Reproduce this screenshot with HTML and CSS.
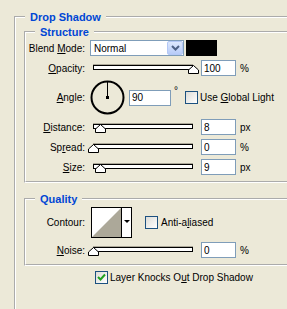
FILE: index.html
```html
<!DOCTYPE html>
<html lang="en">
<head>
    <meta charset="UTF-8">
    <title>Layer Style - Drop Shadow</title>
    <link rel="stylesheet" href="styles.css">
</head>
<body>
    <div class="dialog">
        <fieldset class="group outer">
            <legend>Drop Shadow</legend>

            <!-- structure -->
            <fieldset class="group sub">
                <legend>Structure</legend>
                <div class="rows">
                    <div class="row">
                        <label class="lbl">Blend <u>M</u>ode:</label>
                        <div class="select">
                            <span>Normal</span>
                            <span class="select-btn">
                                <svg width="9" height="6" viewBox="0 0 9 6"><path d="M1 1 L4.5 4.5 L8 1" fill="none" stroke="#4d6185" stroke-width="2"/></svg>
                            </span>
                        </div>
                        <div class="swatch"></div>
                    </div>
                    <div class="row">
                        <label class="lbl"><u>O</u>pacity:</label>
                        <div class="slider">
                            <div class="track"></div>
                            <svg class="thumb" style="left: calc(100% - 5px)" width="11" height="9" viewBox="0 0 11 9"><path d="M0.5 8.5 L0.5 5 L5.5 0.5 L10.5 5 L10.5 8.5 Z" fill="#fff" stroke="#000"/></svg>
                        </div>
                        <input class="num" type="text" value="100">
                        <span class="unit">%</span>
                    </div>
                    <div class="row angle-row">
                        <label class="lbl"><u>A</u>ngle:</label>
                        <svg class="dial" width="35" height="35" viewBox="0 0 35 35">
                            <circle cx="17.5" cy="17.5" r="16" fill="none" stroke="#000" stroke-width="2"/>
                            <line x1="17.5" y1="17.5" x2="17.5" y2="2" stroke="#000" stroke-width="1"/>
                            <rect x="16" y="16" width="3" height="3" fill="#000"/>
                        </svg>
                        <input class="num num-angle" type="text" value="90">
                        <span class="deg">°</span>
                        <label class="check global"><span class="box"></span><span>Use <u>G</u>lobal Light</span></label>
                    </div>
                    <div class="row">
                        <label class="lbl"><u>D</u>istance:</label>
                        <div class="slider">
                            <div class="track"></div>
                            <svg class="thumb" style="left: calc(7% - 5px)" width="11" height="9" viewBox="0 0 11 9"><path d="M0.5 8.5 L0.5 5 L5.5 0.5 L10.5 5 L10.5 8.5 Z" fill="#fff" stroke="#000"/></svg>
                        </div>
                        <input class="num" type="text" value="8">
                        <span class="unit">px</span>
                    </div>
                    <div class="row">
                        <label class="lbl">Sp<u>r</u>ead:</label>
                        <div class="slider">
                            <div class="track"></div>
                            <svg class="thumb" style="left: -5px" width="11" height="9" viewBox="0 0 11 9"><path d="M0.5 8.5 L0.5 5 L5.5 0.5 L10.5 5 L10.5 8.5 Z" fill="#fff" stroke="#000"/></svg>
                        </div>
                        <input class="num" type="text" value="0">
                        <span class="unit">%</span>
                    </div>
                    <div class="row">
                        <label class="lbl"><u>S</u>ize:</label>
                        <div class="slider">
                            <div class="track"></div>
                            <svg class="thumb" style="left: calc(7% - 5px)" width="11" height="9" viewBox="0 0 11 9"><path d="M0.5 8.5 L0.5 5 L5.5 0.5 L10.5 5 L10.5 8.5 Z" fill="#fff" stroke="#000"/></svg>
                        </div>
                        <input class="num" type="text" value="9">
                        <span class="unit">px</span>
                    </div>
                </div>
            </fieldset>

            <!-- quality -->
            <fieldset class="group sub quality">
                <legend>Quality</legend>
                <div class="rows">
                    <div class="row contour-row">
                        <label class="lbl">Contour:</label>
                        <div class="contour">
                            <svg class="contour-preview" width="29" height="29" viewBox="0 0 29 29">
                                <rect width="29" height="29" fill="#fff"/>
                                <path d="M29 0 L29 29 L0 29 Z" fill="#aca899"/>
                            </svg>
                            <span class="contour-btn"></span>
                        </div>
                        <label class="check anti"><span class="box"></span><span>Anti-a<u>l</u>iased</span></label>
                    </div>
                    <div class="row">
                        <label class="lbl"><u>N</u>oise:</label>
                        <div class="slider">
                            <div class="track"></div>
                            <svg class="thumb" style="left: -5px" width="11" height="9" viewBox="0 0 11 9"><path d="M0.5 8.5 L0.5 5 L5.5 0.5 L10.5 5 L10.5 8.5 Z" fill="#fff" stroke="#000"/></svg>
                        </div>
                        <input class="num" type="text" value="0">
                        <span class="unit">%</span>
                    </div>
                </div>
            </fieldset>

            <label class="check knock">
                <span class="box">
                    <svg width="11" height="11" viewBox="0 0 11 11"><path d="M2 5 L4.5 7.5 L9 2.5" fill="none" stroke="#21a121" stroke-width="2"/></svg>
                </span>
                <span>Layer Knocks O<u>u</u>t Drop Shadow</span>
            </label>
        </fieldset>
    </div>
</body>
</html>
```

FILE: styles.css
```css
html, body { margin: 0; width: 287px; height: 309px; overflow: hidden; }
body {
    background: #ece9d8; color: #000;
    font: 10px "Liberation Sans", Arial, sans-serif;
}
.dialog { padding: 10px 0 0 14px; height: 309px; box-sizing: border-box; }

/* etched group boxes, open to the right like the clipped dialog */
.group {
    margin: 0; padding: 0; min-width: 0;
    border: 2px groove #fff; border-right: 0;
}
.group legend {
    padding: 0 5px;
    font: bold 11px/14px "Liberation Sans", Arial, sans-serif;
    color: #0046d5;
}
.outer { height: 299px; box-sizing: border-box; padding: 0 0 0 8px; border-bottom: 0; }
.outer > legend { margin-left: 1px; }
.sub { margin-top: 1px; padding: 1px 0 6px 0; }
.sub > legend { margin-left: 9px; }
.quality { margin-top: 9px; }

.rows { display: flex; flex-direction: column; gap: 4px; }
.row { display: flex; align-items: center; height: 16px; }
.angle-row { height: 35px; }
.contour-row { height: 31px; }
.lbl { width: 59px; flex: none; text-align: right; }

/* blend mode */
.select {
    display: flex; align-items: center;
    width: 94px; height: 16px; margin-left: 5px; padding-left: 3px;
    box-sizing: border-box; border: 1px solid #7f9db9; background: #fff;
}
.select-btn {
    display: flex; align-items: center; justify-content: center;
    width: 16px; height: 14px; margin-left: auto; box-sizing: border-box;
    border: 1px solid #b4c8f6; border-radius: 2px;
    background: linear-gradient(#dde8fe, #b7cbf8);
}
.swatch { width: 31px; height: 16px; margin-left: 2px; background: #000; }

/* sliders */
.slider { position: relative; width: 100px; height: 16px; margin: 0 8px; flex: none; }
.track {
    margin-top: 5px; height: 3px;
    border: 1px solid #000; background: #fff;
    box-shadow: 0 -1px 0 #aca899;
}
.thumb { position: absolute; top: 5px; }

.num {
    width: 35px; height: 16px; margin: 0; padding: 0 0 0 2px;
    box-sizing: border-box; border: 1px solid #7f9db9; background: #fff;
    font: 10px "Liberation Sans", Arial, sans-serif; color: #000;
}
.unit { margin-left: 4px; }

/* angle */
.dial { margin-left: 5px; flex: none; }
.num-angle { width: 42px; margin-left: 4px; }
.deg { align-self: flex-start; margin: 5px 0 0 3px; }

/* checkboxes */
.check { display: flex; align-items: center; gap: 2px; }
.box {
    display: flex; align-items: center; justify-content: center;
    width: 13px; height: 13px; box-sizing: border-box; flex: none;
    border: 1px solid #1c5180;
    background: linear-gradient(135deg, #dcdcd7, #fff);
}
.global { margin-left: 7px; }
.anti { margin-left: 13px; gap: 3px; }
.knock { margin: 5px 0 0 71px; height: 13px; }

/* contour */
.contour {
    display: flex; width: 41px; height: 31px; margin-left: 6px;
    box-sizing: border-box; border: 1px solid #000;
}
.contour-preview { display: block; }
.contour-btn {
    flex: 1; position: relative;
    border-left: 1px solid #000; background: #fff;
}
.contour-btn::after {
    content: ""; position: absolute; left: 2px; top: 12px;
    border-left: 3px solid transparent; border-right: 3px solid transparent;
    border-top: 3px solid #000;
}
```
